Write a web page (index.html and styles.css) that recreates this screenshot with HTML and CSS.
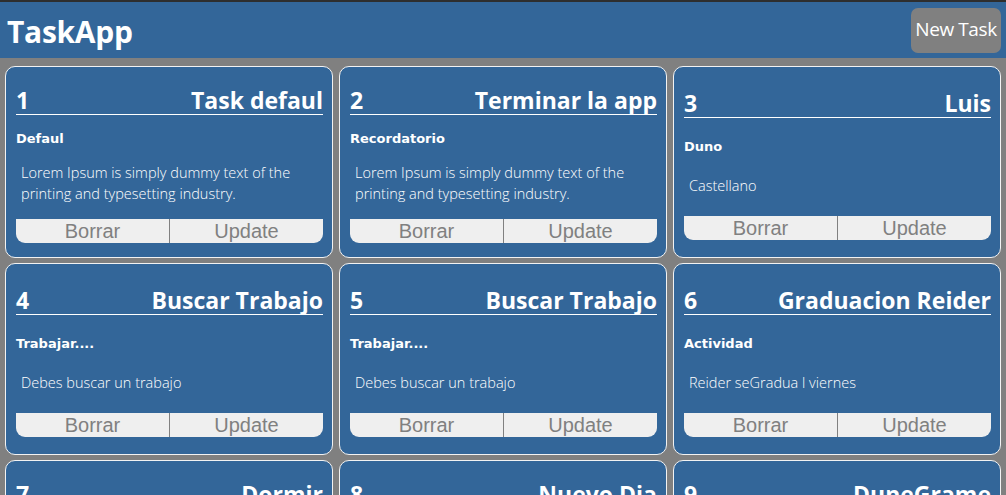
FILE: index.html
```html
<!DOCTYPE html>
<html lang="es">
<head>
<meta charset="utf-8">
<title>TaskApp</title>
<link rel="stylesheet" href="styles.css">
</head>
<body>
<header class="topbar">
  <h1 class="brand">TaskApp</h1>
  <button class="new-task">New Task</button>
</header>
<main class="grid">
  <article class="card">
    <div class="card-head"><span>1</span><span>Task defaul</span></div>
    <div class="card-sub">Defaul</div>
    <p class="card-desc">Lorem Ipsum is simply dummy text of the printing and typesetting industry.</p>
    <div class="actions"><button class="btn">Borrar</button><button class="btn">Update</button></div>
  </article>
  <article class="card">
    <div class="card-head"><span>2</span><span>Terminar la app</span></div>
    <div class="card-sub">Recordatorio</div>
    <p class="card-desc">Lorem Ipsum is simply dummy text of the printing and typesetting industry.</p>
    <div class="actions"><button class="btn">Borrar</button><button class="btn">Update</button></div>
  </article>
  <article class="card">
    <div class="card-head"><span>3</span><span>Luis</span></div>
    <div class="card-sub">Duno</div>
    <p class="card-desc">Castellano</p>
    <div class="actions"><button class="btn">Borrar</button><button class="btn">Update</button></div>
  </article>
  <article class="card">
    <div class="card-head"><span>4</span><span>Buscar Trabajo</span></div>
    <div class="card-sub">Trabajar....</div>
    <p class="card-desc">Debes buscar un trabajo</p>
    <div class="actions"><button class="btn">Borrar</button><button class="btn">Update</button></div>
  </article>
  <article class="card">
    <div class="card-head"><span>5</span><span>Buscar Trabajo</span></div>
    <div class="card-sub">Trabajar....</div>
    <p class="card-desc">Debes buscar un trabajo</p>
    <div class="actions"><button class="btn">Borrar</button><button class="btn">Update</button></div>
  </article>
  <article class="card">
    <div class="card-head"><span>6</span><span>Graduacion Reider</span></div>
    <div class="card-sub">Actividad</div>
    <p class="card-desc">Reider seGradua l viernes</p>
    <div class="actions"><button class="btn">Borrar</button><button class="btn">Update</button></div>
  </article>
  <article class="card">
    <div class="card-head"><span>7</span><span>Dormir</span></div>
    <div class="card-sub">Descanso</div>
    <p class="card-desc">Dormir temprano para descansar bien antes del trabajo de mañana.</p>
    <div class="actions"><button class="btn">Borrar</button><button class="btn">Update</button></div>
  </article>
  <article class="card">
    <div class="card-head"><span>8</span><span>Nuevo Dia</span></div>
    <div class="card-sub">Recordatorio</div>
    <p class="card-desc">Empezar un nuevo dia con energia y terminar las tareas pendientes.</p>
    <div class="actions"><button class="btn">Borrar</button><button class="btn">Update</button></div>
  </article>
  <article class="card">
    <div class="card-head"><span>9</span><span>DuneGrame</span></div>
    <div class="card-sub">Juego</div>
    <p class="card-desc">Jugar un rato despues de terminar todas las tareas del dia.</p>
    <div class="actions"><button class="btn">Borrar</button><button class="btn">Update</button></div>
  </article>
</main>
</body>
</html>
```
FILE: styles.css
```css
html, body {
  margin: 0;
  padding: 0;
}

body {
  background: #808080;
  font-family: "Open Sans", "Noto Sans", sans-serif;
  height: 100vh;
  overflow: hidden;
}

.topbar {
  border-top: 2px solid #2e2e2e;
  background: #336699;
  height: 56px;
  display: flex;
  justify-content: space-between;
  align-items: flex-start;
  padding: 0 5px 0 7px;
}

.brand {
  margin: 0;
  color: #fff;
  font-family: "Open Sans", sans-serif;
  font-weight: 700;
  font-size: 30px;
  line-height: 30px;
  letter-spacing: -0.3px;
  padding-top: 15px;
}

.new-task {
  margin-top: 6px;
  width: 90px;
  height: 45px;
  border: 0;
  border-radius: 7px;
  background: #808080;
  color: #fff;
  font-family: "Open Sans", sans-serif;
  font-size: 19px;
  letter-spacing: -0.4px;
  padding: 0 0 4px;
}

.grid {
  display: grid;
  grid-template-columns: repeat(3, 1fr);
  grid-auto-rows: 192px;
  gap: 5px 6px;
  padding: 8px 5px 0;
}

.card {
  box-sizing: border-box;
  border: 1px solid #f2f2f2;
  border-radius: 10px;
  background: #336699;
  color: #fff;
  display: flex;
  flex-direction: column;
  justify-content: space-around;
  padding: 12px 9px 7px 10px;
  min-width: 0;
}

.card-head {
  display: flex;
  justify-content: space-between;
  align-items: baseline;
  font-weight: 700;
  font-size: 23px;
  line-height: 28px;
  border-bottom: 1px solid #fff;
  white-space: nowrap;
}

.card-sub {
  font-family: "DejaVu Sans", sans-serif;
  font-weight: 700;
  font-size: 13px;
  line-height: 18px;
}

.card-desc {
  margin: 0;
  padding: 0 10px 0 5px;
  font-weight: 300;
  font-size: 14.5px;
  line-height: 21px;
}

.actions {
  display: flex;
  height: 24px;
  background: #efefef;
  border-radius: 0 0 9px 9px;
  overflow: hidden;
}

.btn {
  flex: 1;
  border: 0;
  background: transparent;
  color: #808080;
  font-family: "Liberation Sans", Arial, sans-serif;
  font-size: 20px;
  line-height: 24px;
  padding: 0;
}

.btn + .btn {
  border-left: 1px solid #808080;
}
```
